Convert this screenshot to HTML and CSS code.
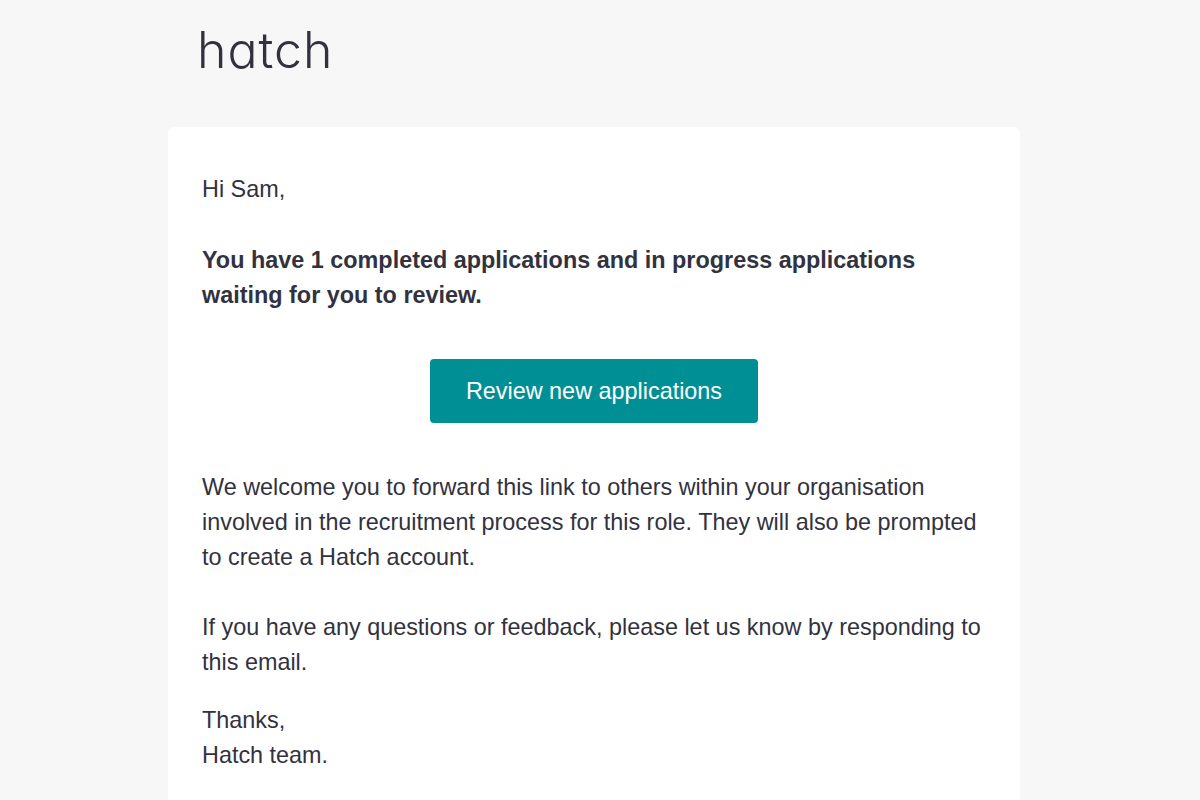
FILE: index.html
```html
<!DOCTYPE html>
<html lang="en">
<head>
<meta charset="utf-8">
<title>Hatch</title>
<link rel="stylesheet" href="styles.css">
</head>
<body>
<div class="page">
  <header class="logo-row">
    <span class="logo">hatch</span>
  </header>
  <main class="card">
    <p class="line">Hi Sam,</p>
    <p class="lead">You have 1 completed applications and in progress applications waiting for you to review.</p>
    <div class="cta-row"><a class="cta">Review new applications</a></div>
    <p class="para">We welcome you to forward this link to others within your organisation involved in the recruitment process for this role. They will also be prompted to create a Hatch account.</p>
    <p class="para second">If you have any questions or feedback, please let us know by responding to this email.</p>
    <p class="sign">Thanks,<br>Hatch team.</p>
  </main>
</div>
</body>
</html>
```
FILE: styles.css
```css
html, body { margin: 0; padding: 0; height: 100%; overflow: hidden; background: #f7f7f7; }
body { font-family: "Liberation Sans", Arial, sans-serif; color: #32323f; font-size: 23.4px; line-height: 35px; }
.page { width: 852px; margin-left: 168px; }
.logo-row { height: 127px; padding-left: 29px; box-sizing: border-box; }
.logo { display: block; font-family: "Inter", sans-serif; font-feature-settings: "cv11" 1; font-weight: 350; font-size: 50px; line-height: 100px; letter-spacing: 1px; }
.card { background: #fff; border-radius: 6px; padding: 45px 34px 0; height: 700px; box-sizing: border-box; }
p { margin: 0; }
.lead { font-weight: 700; margin-top: 36px; }
.cta-row { display: flex; justify-content: center; margin-top: 46px; }
.cta { display: block; width: 328px; height: 64px; line-height: 64px; text-align: center; background: #018f96; color: #fff; border-radius: 4px; }
.para { margin-top: 47px; }
.second { margin-top: 35px; }
.sign { margin-top: 23px; }
```
